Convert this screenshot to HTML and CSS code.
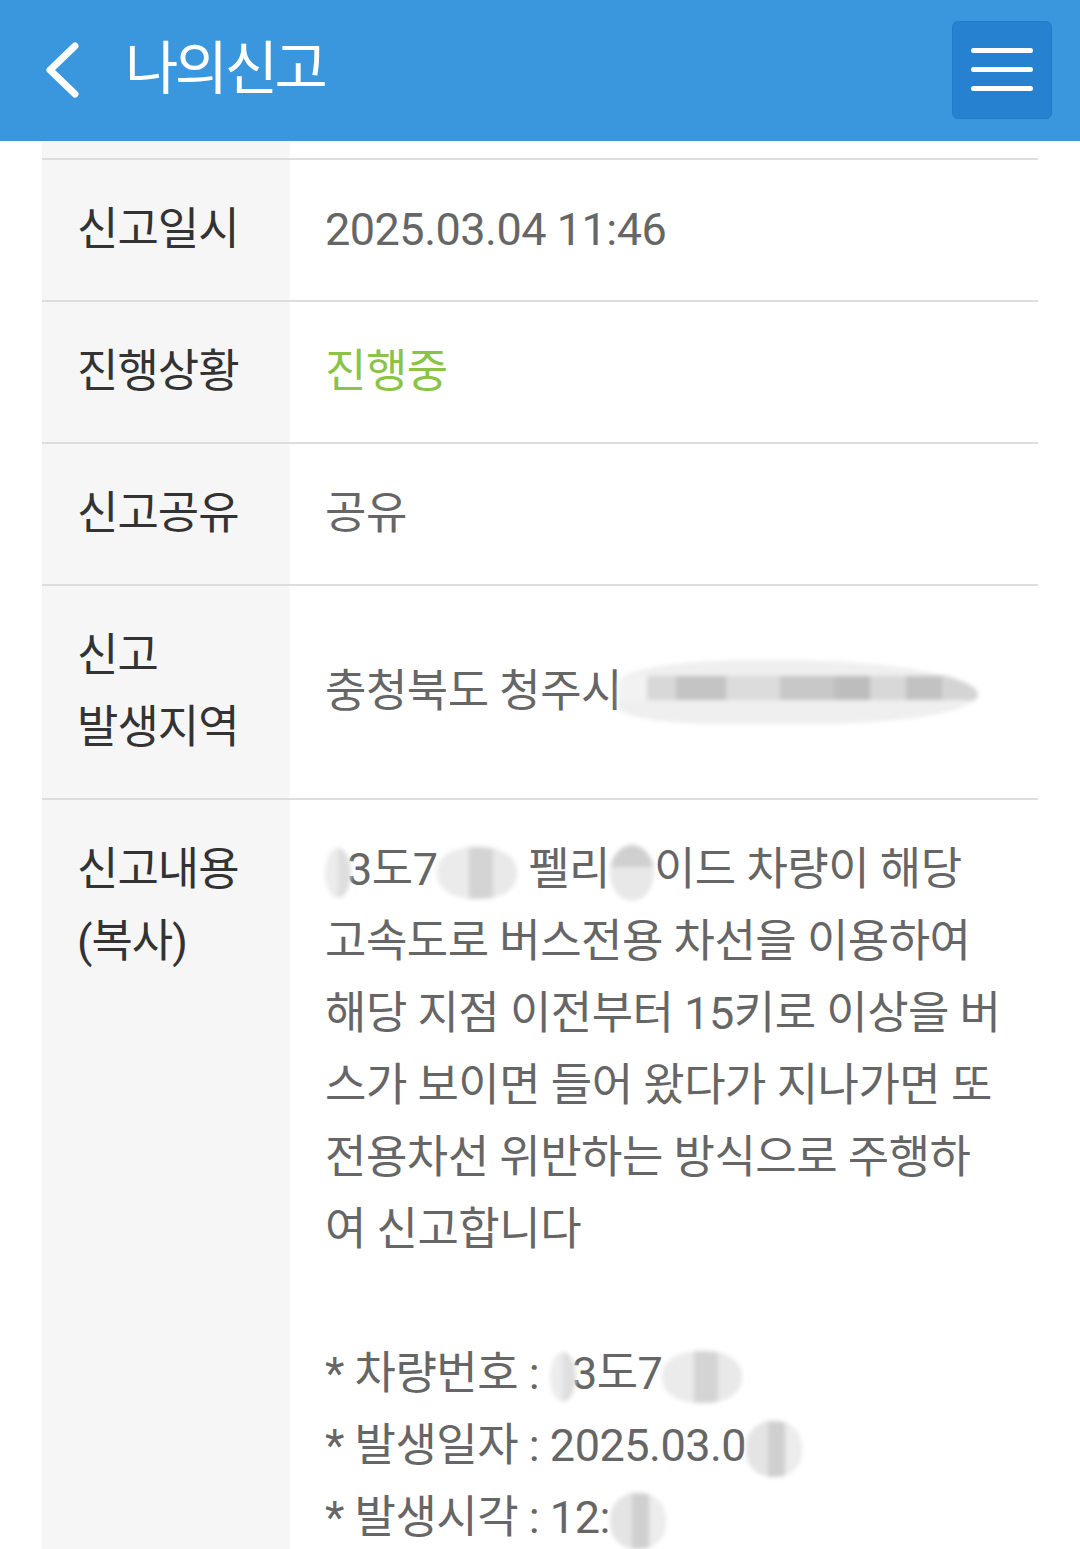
FILE: index.html
```html
<!DOCTYPE html>
<html lang="ko">
<head>
    <meta charset="UTF-8">
    <meta name="viewport" content="width=device-width, initial-scale=1.0">
    <title>나의신고</title>
    <link rel="stylesheet" href="styles.css">
</head>
<body>

    <!-- 상단 바 -->
    <header class="topbar">
        <a href="#" class="back">
            <svg width="40" height="60" viewBox="0 0 40 60">
                <polyline points="31,5 6,29 31,53" fill="none" stroke="#fff" stroke-width="7" stroke-linecap="round" stroke-linejoin="round"/>
            </svg>
        </a>
        <h1 class="title">나의신고</h1>
        <button class="menu">
            <span></span><span></span><span></span>
        </button>
    </header>

    <!-- 신고 상세 -->
    <div class="detail">
        <div class="row row-cut">
            <div class="label"></div>
            <div class="value"></div>
        </div>
        <div class="row">
            <div class="label">신고일시</div>
            <div class="value">2025.03.04 11:46</div>
        </div>
        <div class="row">
            <div class="label">진행상황</div>
            <div class="value status">진행중</div>
        </div>
        <div class="row">
            <div class="label">신고공유</div>
            <div class="value">공유</div>
        </div>
        <div class="row">
            <div class="label">신고<br>발생지역</div>
            <div class="value middle">충청북도 청주시<span class="blur blur-addr"></span></div>
        </div>
        <div class="row">
            <div class="label">신고내용<br>(복사)</div>
            <div class="value">
                <span class="blur blur-dot"></span>3도7<span class="blur blur-num"></span> 펠리<span class="blur blur-mid"></span>이드 차량이 해당<br>
                고속도로 버스전용 차선을 이용하여<br>
                해당 지점 이전부터 15키로 이상을 버<br>
                스가 보이면 들어 왔다가 지나가면 또<br>
                전용차선 위반하는 방식으로 주행하<br>
                여 신고합니다<br>
                <br>
                * 차량번호 : <span class="blur blur-dot"></span>3도7<span class="blur blur-num"></span><br>
                * 발생일자 : 2025.03.0<span class="blur blur-end"></span><br>
                * 발생시각 : 12:<span class="blur blur-end"></span>
            </div>
        </div>
    </div>

</body>
</html>
```

FILE: styles.css
```css
body {
    margin: 0;
    padding: 0;
    font-family: Roboto, "Noto Sans CJK KR", sans-serif;
    background-color: #ffffff;
    height: 100vh;
    overflow: hidden;
}

.topbar {
    height: 141px;
    background-color: #3a97de;
    display: flex;
    align-items: center;
    padding: 0 28px 0 44px;
    box-sizing: border-box;
}

.back {
    display: flex;
    width: 40px;
    height: 60px;
}

.title {
    margin: 0 0 0 41px;
    flex: 1;
    color: #ffffff;
    font-size: 58px;
    font-weight: 400;
    letter-spacing: -3.5px;
    line-height: 1;
    padding-bottom: 4px;
}

.menu {
    width: 100px;
    height: 98px;
    margin-top: -2px;
    background-color: #2682d0;
    border: 1px solid #237bc5;
    border-radius: 6px;
    display: flex;
    flex-direction: column;
    justify-content: center;
    align-items: center;
    gap: 14px;
    padding: 0;
}

.menu span {
    display: block;
    width: 62px;
    height: 5px;
    border-radius: 3px;
    background-color: #ffffff;
}

.detail {
    margin: 0 42px;
}

.row {
    display: flex;
    border-top: 2px solid #dddddd;
    font-size: 45px;
    line-height: 72px;
}

.row-cut {
    border-top: none;
    height: 17px;
    overflow: hidden;
}

.label {
    width: 248px;
    flex-shrink: 0;
    background-color: #f6f6f6;
    color: #333333;
    padding: 34px 0 34px 35px;
    box-sizing: border-box;
    letter-spacing: -1px;
}

.row-cut .label,
.row-cut .value {
    padding: 0;
}

.value {
    flex: 1;
    color: #666666;
    padding: 34px 20px 34px 35px;
    white-space: nowrap;
    letter-spacing: -0.5px;
}

.value.middle {
    display: flex;
    align-items: center;
}

.status {
    color: #8bc34a;
}

/* 모자이크 처리 */
.blur {
    display: inline-block;
    vertical-align: middle;
    filter: blur(2px);
}

.blur-addr {
    width: 360px;
    height: 64px;
    margin-left: -4px;
    border-radius: 40% 60% 50% 30%;
    background:
        linear-gradient(90deg, #f2f2f2 0 8%, #d8d8d8 8% 16%, #c4c4c4 16% 30%, #dcdcdc 30% 45%, #c8c8c8 45% 60%, #bdbdbd 60% 70%, #d8d8d8 70% 80%, #c2c2c2 80% 90%, #d4d4d4 90% 100%) 0 16px / 100% 24px no-repeat,
        #efefef;
}

.blur-dot {
    width: 26px;
    height: 50px;
    margin-right: -4px;
    border-radius: 50%;
    background: linear-gradient(90deg, #ececec 50%, #dedede 50%);
}

.blur-num {
    width: 80px;
    height: 52px;
    border-radius: 45%;
    background: linear-gradient(90deg, #ebebeb 0 40%, #d4d4d4 40% 70%, #e9e9e9 70%);
}

.blur-mid {
    width: 44px;
    height: 56px;
    border-radius: 50%;
    background: linear-gradient(180deg, #d0d0d0 40%, #e8e8e8 40%);
}

.blur-end {
    width: 56px;
    height: 56px;
    border-radius: 45%;
    background: linear-gradient(90deg, #e4e4e4 0 40%, #d0d0d0 40% 70%, #ececec 70%);
}
```
